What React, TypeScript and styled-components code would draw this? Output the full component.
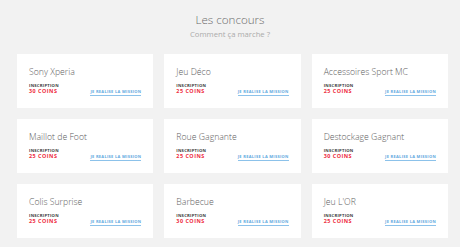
import React from "react";
import styled, { createGlobalStyle } from "styled-components";

const GlobalStyle = createGlobalStyle`
  html, body {
    margin: 0;
    padding: 0;
    background: #f2f2f2;
    font-family: "Open Sans", "Liberation Sans", sans-serif;
  }
`;

const Page = styled.div`
  width: 460px;
  height: 247px;
  overflow: hidden;
  background: #f2f2f2;
`;

const Header = styled.header`
  display: flex;
  flex-direction: column;
  align-items: center;
  padding-top: 12px;
`;

const Title = styled.h1`
  margin: 0;
  font-size: 11.6px;
  line-height: 16px;
  font-weight: 300;
  color: #6a6a6a;
`;

const Subtitle = styled.p`
  margin: 1px 0 0;
  font-size: 7.7px;
  line-height: 10px;
  font-weight: 400;
  color: #ababab;
`;

const Grid = styled.section`
  display: grid;
  grid-template-columns: repeat(3, 1fr);
  column-gap: 11px;
  row-gap: 11px;
  padding: 0 12px 0 17px;
  margin-top: 15px;
`;

const Card = styled.article`
  background: #ffffff;
  height: 54px;
  box-sizing: border-box;
  padding: 12px 12px 0 12px;
  display: flex;
  flex-direction: column;
`;

const CardTitle = styled.h2`
  margin: 0;
  font-size: 8.7px;
  line-height: 12px;
  font-weight: 300;
  color: #5e5e5e;
  white-space: nowrap;
`;

const Footer = styled.div`
  display: flex;
  justify-content: space-between;
  align-items: flex-end;
  margin-top: 5px;
`;

const Price = styled.div`
  display: flex;
  flex-direction: column;
`;

const Label = styled.span`
  font-size: 4.2px;
  line-height: 5px;
  font-weight: 700;
  letter-spacing: 0.25px;
  color: #3a3a3a;
`;

const Coins = styled.span`
  font-size: 5.4px;
  line-height: 7px;
  font-weight: 700;
  letter-spacing: 0.5px;
  color: #ee2a3c;
`;

const Link = styled.a`
  font-size: 4px;
  line-height: 5px;
  font-weight: 700;
  letter-spacing: 0.3px;
  color: #5fa9e0;
  text-decoration: none;
  padding-bottom: 1.5px;
  border-bottom: 1.5px solid #8cc2ea;
  margin-bottom: -1px;
  white-space: nowrap;
`;

const contests = [
  { name: "Sony Xperia", coins: 30 },
  { name: "Jeu Déco", coins: 25 },
  { name: "Accessoires Sport MC", coins: 25 },
  { name: "Maillot de Foot", coins: 25 },
  { name: "Roue Gagnante", coins: 25 },
  { name: "Destockage Gagnant", coins: 30 },
  { name: "Colis Surprise", coins: 25 },
  { name: "Barbecue", coins: 30 },
  { name: "Jeu L'OR", coins: 25 },
];

export default function App() {
  return (
    <Page>
      <GlobalStyle />
      <Header>
        <Title>Les concours</Title>
        <Subtitle>Comment ça marche ?</Subtitle>
      </Header>
      <Grid>
        {contests.map((c) => (
          <Card key={c.name}>
            <CardTitle>{c.name}</CardTitle>
            <Footer>
              <Price>
                <Label>INSCRIPTION</Label>
                <Coins>{c.coins} COINS</Coins>
              </Price>
              <Link href="#">JE REALISE LA MISSION</Link>
            </Footer>
          </Card>
        ))}
      </Grid>
    </Page>
  );
}
